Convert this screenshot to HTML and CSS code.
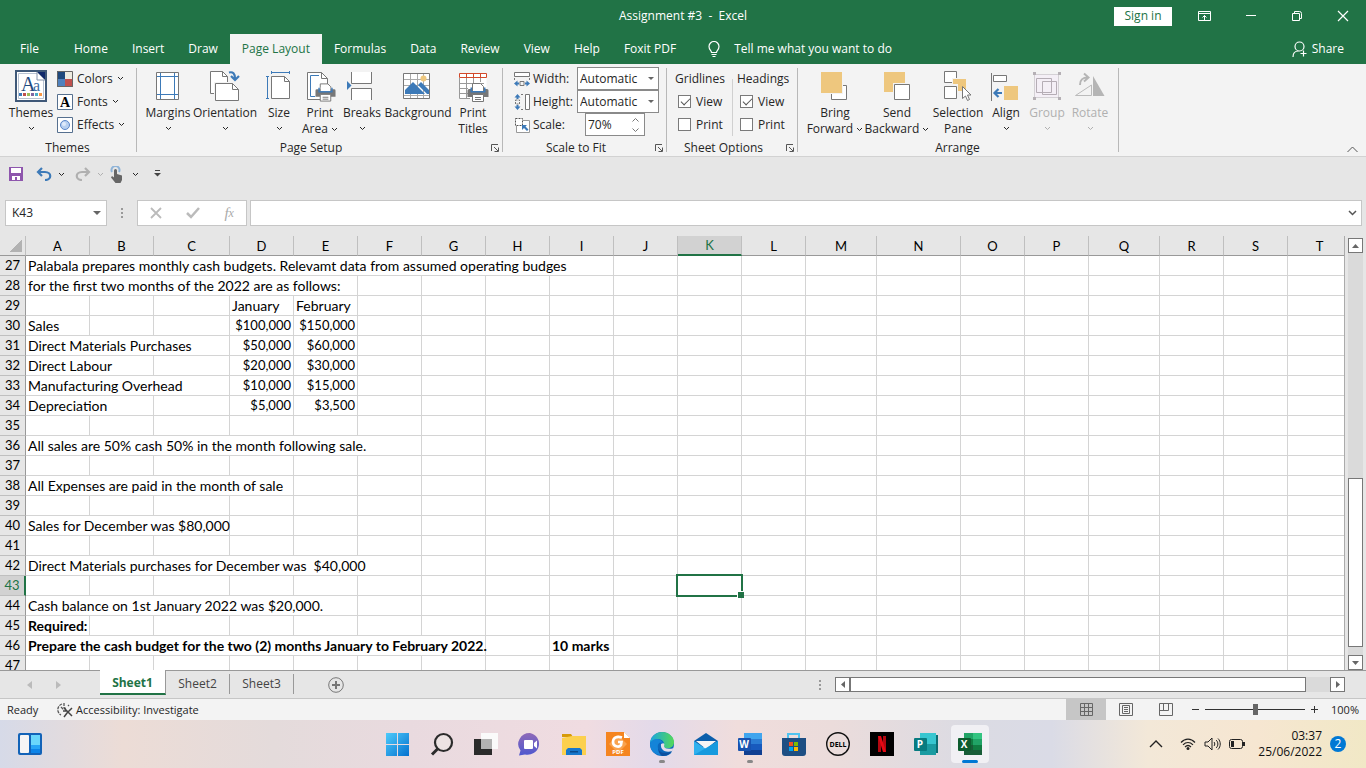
FILE: index.html
```
<!DOCTYPE html>
<html lang="en">
<head>
  <meta charset="UTF-8">
  <meta name="viewport" content="width=device-width, initial-scale=1.0">
  <title>Assignment #3 - Excel</title>
  <link rel="stylesheet" href="styles.css">
</head>
<body>
  <!-- shared symbols -->
  <svg class="defs" width="0" height="0">
    <symbol id="caret" viewBox="0 0 7 5"><path d="M1 1l2.5 2.5L6 1" fill="none" stroke="currentColor" stroke-width="1"/></symbol>
    <symbol id="launcher" viewBox="0 0 8 8"><path d="M0.5 7V0.5H7M3 3l4 4M7.5 3.5v4h-4" fill="none" stroke="#555"/></symbol>
    <symbol id="printer" viewBox="0 0 22 20">
      <path d="M5.500 8V1.500h8l3 3V8z" fill="#fff" stroke="#777"/>
      <path d="M2 7h18a1.500 1.500 0 0 1 1.500 1.500V15H.5V8.500A1.500 1.500 0 0 1 2 7z" fill="#777"/>
      <path d="M3.500 5.500H5V9h12V5.500h1.500v5h-15z" fill="#3d7ab8"/>
      <path d="M6 5h10v4H6z" fill="#fff"/>
      <path d="M5.500 12.500h11v7h-11z" fill="#fff" stroke="#777"/>
      <path d="M8 15.500h6M8 17.500h6" stroke="#777"/>
    </symbol>
  </svg>

  <header class="titlebar">
    <h1>Assignment #3&nbsp; -&nbsp; Excel</h1>
    <div class="window-tools">
      <button type="button" class="sign-in">Sign in</button>
      <button type="button" class="win-btn" aria-label="Ribbon display options"><svg width="14" height="12"><path d="M.5 1.500h12v9H.5zM.5 3.500h12M6.500 10V5.500M4.500 7.500l2-2 2 2" fill="none" stroke="#fff"/></svg></button>
      <button type="button" class="win-btn" aria-label="Minimize"><svg width="12" height="12"><path d="M1 5.500h10" stroke="#fff"/></svg></button>
      <button type="button" class="win-btn" aria-label="Restore"><svg width="12" height="12"><path d="M1.500 3.500h7v7h-7zM3.500 3V1.500h5a2 2 0 0 1 2 2v5H9" fill="none" stroke="#fff"/></svg></button>
      <button type="button" class="win-btn" aria-label="Close"><svg width="12" height="12"><path d="M1 1l10 10M11 1L1 11" stroke="#fff" stroke-width="1.200"/></svg></button>
    </div>
  </header>

  <nav class="ribbon-tabs">
    <a href="#file" class="file">File</a>
    <a href="#home">Home</a>
    <a href="#insert">Insert</a>
    <a href="#draw">Draw</a>
    <a href="#layout" class="active">Page Layout</a>
    <a href="#formulas">Formulas</a>
    <a href="#data">Data</a>
    <a href="#review">Review</a>
    <a href="#view">View</a>
    <a href="#help">Help</a>
    <a href="#foxit">Foxit PDF</a>
    <button type="button" class="tell-me"><svg width="12" height="17"><path d="M3.500 11.500c0-2-2.500-2.500-2.500-6a5 5 0 0 1 10 0c0 3.500-2.500 4-2.500 6zM3.500 13.500h5M4.500 15.500h3" fill="none" stroke="#fff" stroke-width="1.200"/></svg>Tell me what you want to do</button>
    <button type="button" class="share"><svg width="16" height="17"><path d="M7.500 1a4 4 0 1 1 0 9 4 4 0 1 1 0-9M1 16c0-4 2.500-6 5.500-6M11.500 9.500v6M8.500 12.500h6" fill="none" stroke="#fff" stroke-width="1.200"/></svg>Share</button>
  </nav>

  <section class="ribbon" aria-label="Page Layout">
    <div class="group themes">
      <div class="group-body">
        <button type="button" class="big">
          <svg width="32" height="32"><path d="M1 1h30v30H1z" fill="#fff" stroke="#3f5878" stroke-width="2"/><path d="M3.500 3.500h25v25h-25z" fill="none" stroke="#b9c3d2"/><path d="M22 2l8 8V2z" fill="#10296b"/><path d="M22 2v8h8z" fill="#fff" stroke="#8492aa"/><text x="6" y="21" class="themes-a">A</text><text x="18" y="21" class="themes-b">a</text><path d="M4 23h3v3H4z" fill="#3d7ab8"/><path d="M8 23h3v3H8z" fill="#c0504d"/><path d="M12 23h3v3h-3z" fill="#9bbb59"/><path d="M16 23h3v3h-3z" fill="#8064a2"/><path d="M20 23h3v3h-3z" fill="#4bacc6"/><path d="M24 23h3v3h-3z" fill="#f79646"/></svg>
          Themes<svg class="caret"><use href="#caret"/></svg>
        </button>
        <div class="stack">
          <button type="button" class="small"><svg width="16" height="16"><path d="M0 0h8v8H0z" fill="#1f497d"/><path d="M8 0h8v8H8z" fill="#eeece1"/><path d="M0 8h8v8H0z" fill="#4f81bd"/><path d="M8 8h8v8H8z" fill="#c0504d"/><path d="M.5.5h15v15H.5z" fill="none" stroke="#666"/></svg>Colors<svg class="caret"><use href="#caret"/></svg></button>
          <button type="button" class="small"><svg width="16" height="16"><path d="M.5.5h15v15H.5z" fill="#fff" stroke="#56708f"/><text x="8" y="13" class="font-a">A</text></svg>Fonts<svg class="caret"><use href="#caret"/></svg></button>
          <button type="button" class="small"><svg width="16" height="16"><path d="M.5.5h15v15H.5z" fill="#fff" stroke="#56708f"/><circle cx="8" cy="8" r="4.500" fill="#b7cff0" stroke="#5b86c9"/><circle cx="7" cy="7" r="2" fill="#dfeafb"/></svg>Effects<svg class="caret"><use href="#caret"/></svg></button>
        </div>
      </div>
      <h2>Themes</h2>
    </div>

    <div class="group page-setup">
      <div class="group-body">
        <button type="button" class="big">
          <svg width="32" height="32"><path d="M4.500 2.500h22v27h-22z" fill="#fff" stroke="#777"/><path d="M8.500 3v26M22.500 3v26M5 6.500h21M5 24.500h21" stroke="#3d7ab8"/></svg>
          Margins<svg class="caret"><use href="#caret"/></svg>
        </button>
        <button type="button" class="big">
          <svg width="32" height="32"><path d="M1.500 1.500h12l5 5v17h-17z" fill="#fff" stroke="#777"/><path d="M13.500 1.500v5h5" fill="none" stroke="#777"/><path d="M5 12h20l7 7v13H5z" fill="#f3f3f3"/><path d="M6.500 13.500h17l6 6v11h-23z" fill="#fff" stroke="#777"/><path d="M23.500 13.500v6h6" fill="none" stroke="#777"/><path d="M20 2.500c4-1 6 1 6 6M22 6l4 4 4-4" fill="none" stroke="#3d7ab8" stroke-width="2.200"/></svg>
          Orientation<svg class="caret"><use href="#caret"/></svg>
        </button>
        <button type="button" class="big">
          <svg width="32" height="32"><path d="M8.500 6.500h13l5 5v17h-18z" fill="#fff" stroke="#777"/><path d="M21.500 6.500v5h5" fill="none" stroke="#777"/><path d="M8 2.500h19M8.500 1v3M26.500 1v3M4.500 6v23M3 6.500h3M3 28.500h3" stroke="#3d7ab8"/></svg>
          Size<svg class="caret"><use href="#caret"/></svg>
        </button>
        <button type="button" class="big">
          <svg width="32" height="32"><path d="M3.500 2.500h14l6 6v21h-20z" fill="#fff" stroke="#777"/><path d="M17.500 2.500v6h6" fill="none" stroke="#777"/><path d="M15 5.500H6.500v21H11" fill="none" stroke="#3d7ab8"/><use href="#printer" x="11" y="12" width="21" height="20"/></svg>
          Print<span>Area <svg class="caret"><use href="#caret"/></svg></span>
        </button>
        <button type="button" class="big">
          <svg width="32" height="32"><path d="M5.500 2v11.500h20V2M5.500 30V18.500h20V30" fill="#fff" stroke="#777"/><path d="M1 11l4.500 4.500L1 20z" fill="#3d7ab8"/></svg>
          Breaks<svg class="caret"><use href="#caret"/></svg>
        </button>
        <button type="button" class="big">
          <svg width="32" height="32"><path d="M1.500 3.500h26v25h-26z" fill="#fff" stroke="#777"/><path d="M2 9.500h25M2 15.500h25M2 25.500h25M8.500 4v24M15.500 4v24M21.500 4v24" stroke="#aaa"/><path d="M3 24v-4l8-8 12 12z" fill="#3d7ab8"/><path d="M16 15l3-3 8 8v4h-2z" fill="#3d7ab8"/><circle cx="21.500" cy="8.500" r="3" fill="#eec77e"/></svg>
          Background
        </button>
        <button type="button" class="big">
          <svg width="32" height="32"><path d="M2.500 3.500h27v25h-27z" fill="#fff"/><path d="M2.500 8v20.500H13M9.500 8v20M16.500 8v6M23.500 8v4M3 13.500h24M3 18.500h8M3 23.500h8" fill="none" stroke="#999"/><path d="M2.500 3.500h27v4h-27zM9.500 4v3M16.500 4v3M23.500 4v3" fill="none" stroke="#d2492a"/><use href="#printer" x="10" y="12" width="22" height="20"/></svg>
          Print<span>Titles</span>
        </button>
      </div>
      <h2>Page Setup</h2>
      <button type="button" class="launcher" aria-label="Page Setup dialog"><svg width="8" height="8"><use href="#launcher"/></svg></button>
    </div>

    <div class="group scale">
      <div class="group-body">
        <div class="field">
          <svg width="16" height="16"><path d="M.5 1.500h15v4H.5z" fill="#fff" stroke="#777"/><path d="M.5 7v2M15.500 7v2M6 10.500h4v4H6z" fill="none" stroke="#777"/><path d="M0 12.500l3.500-3v2H5v2H3.500v2zM16 12.500l-3.500-3v2H11v2h1.500v2z" fill="#3d7ab8"/></svg>
          <label for="width">Width:</label>
          <span class="combo"><select id="width"><option>Automatic</option></select></span>
        </div>
        <div class="field">
          <svg width="16" height="16"><path d="M11.500.5h4v15h-4z" fill="#fff" stroke="#777"/><path d="M7 .5h3M7 15.500h3M1.500 6h4v4h-4z" fill="none" stroke="#777" stroke-dasharray="2 1"/><path d="M3.500 0l3 3.500h-2V5h-2V3.500h-2zM3.500 16l3-3.500h-2V11h-2v1.500h-2z" fill="#3d7ab8"/></svg>
          <label for="height">Height:</label>
          <span class="combo"><select id="height"><option>Automatic</option></select></span>
        </div>
        <div class="field">
          <svg width="16" height="16"><path d="M9 3.500h6.500v12h-13V9" fill="#fff" stroke="#999"/><path d="M1.500 1.500h7v7h-7z" fill="#fff" stroke="#555" stroke-dasharray="2 1"/><path d="M8 8h5l-1.500 1.500 3 3-1.500 1.500-3-3L8 13z" fill="#3d7ab8"/></svg>
          <label for="scale">Scale:</label>
          <span class="spin"><input type="text" id="scale" value="70%"><svg width="7" height="16"><path d="M.5 4.500l3-3 3 3M.5 11.500l3 3 3-3" fill="none" stroke="#777"/></svg></span>
        </div>
      </div>
      <h2>Scale to Fit</h2>
      <button type="button" class="launcher" aria-label="Scale dialog"><svg width="8" height="8"><use href="#launcher"/></svg></button>
    </div>

    <div class="group sheet-options">
      <div class="group-body">
        <fieldset>
          <legend>Gridlines</legend>
          <label><input type="checkbox" checked>View</label>
          <label><input type="checkbox">Print</label>
        </fieldset>
        <fieldset>
          <legend>Headings</legend>
          <label><input type="checkbox" checked>View</label>
          <label><input type="checkbox">Print</label>
        </fieldset>
      </div>
      <h2>Sheet Options</h2>
      <button type="button" class="launcher" aria-label="Sheet dialog"><svg width="8" height="8"><use href="#launcher"/></svg></button>
    </div>

    <div class="group arrange">
      <div class="group-body">
        <button type="button" class="big">
          <svg width="32" height="32"><path d="M12.500 15.500h15v14h-15z" fill="#fff" stroke="#777"/><path d="M1 1h23v23H1z" fill="#f3f3f3"/><path d="M2 2h21v21H2z" fill="#eec77e"/></svg>
          Bring<span>Forward <svg class="caret"><use href="#caret"/></svg></span>
        </button>
        <button type="button" class="big">
          <svg width="32" height="32"><path d="M3 2h21v20H3z" fill="#eec77e"/><path d="M12 13h18v18H12z" fill="#f3f3f3"/><path d="M13.500 14.500h15v15h-15z" fill="#fff" stroke="#777"/></svg>
          Send<span>Backward <svg class="caret"><use href="#caret"/></svg></span>
        </button>
        <button type="button" class="big">
          <svg width="32" height="32"><path d="M2.500 1.500h12v11h-12zM2.500 16.500h12v12h-12z" fill="#fff" stroke="#777"/><path d="M10 8h15v15H15v-8h-5z" fill="#f3f3f3"/><path d="M11 9h13v12h-8v-7h-5z" fill="#eec77e"/><path d="M20.500 16.500v12l3-2.500 2 4.500 2-1-2-4.500h3.500z" fill="#fff" stroke="#777"/></svg>
          Selection<span>Pane</span>
        </button>
        <button type="button" class="big">
          <svg width="32" height="32"><path d="M1.500 3v28" stroke="#777"/><path d="M3.500 5.500h13v6h-13z" fill="#fff" stroke="#777"/><path d="M14 16h14v14H14z" fill="#eec77e"/><path d="M12 23H5M8.500 19L4.500 23l4 4" fill="none" stroke="#3d7ab8" stroke-width="2.200"/></svg>
          Align<svg class="caret"><use href="#caret"/></svg>
        </button>
        <button type="button" class="big" disabled>
          <svg width="32" height="32"><path d="M3.500 4.500h24v23h-24z" fill="#f4eff6" stroke="#b5b0b5" stroke-dasharray="1 1"/><path d="M5.500 8.500h15v14h-15zM11.500 11.500h14v13h-14z" fill="none" stroke="#b5adb5"/><path d="M2 2h3v3H2zM27 2h3v3h-3zM2 27h3v3H2zM27 27h3v3h-3z" fill="#b5b0b5"/></svg>
          Group<svg class="caret"><use href="#caret"/></svg>
        </button>
        <button type="button" class="big" disabled>
          <svg width="32" height="32"><path d="M1.500 25.500h16V15z" fill="#f3f3f3" stroke="#bbb"/><path d="M19 6v20h11.500z" fill="#b5b5b5"/><path d="M6 15c0-6 3-7.500 8-7.500M10 3.500l4.500 4-4.500 4" fill="none" stroke="#b5b5b5" stroke-width="2"/></svg>
          Rotate<svg class="caret"><use href="#caret"/></svg>
        </button>
      </div>
      <h2>Arrange</h2>
    </div>

    <button type="button" class="collapse" aria-label="Collapse ribbon"><svg width="11" height="7"><path d="M.5 6l5-5 5 5" fill="none" stroke="#555"/></svg></button>
  </section>

  <div class="quick-access">
    <button type="button" aria-label="Save"><svg width="14" height="14"><path d="M0 0h14v14H0z" fill="#8e56ad"/><path d="M2 1h10v5H2zM3 9h8v4H8v-3H6v3H3z" fill="#fff"/></svg></button>
    <button type="button" class="undo" aria-label="Undo"><svg width="16" height="14"><path d="M6 1L2 5l4 4M2 5h7c7 0 7 8 0 8" fill="none" stroke="#3d7ab8" stroke-width="2.200"/></svg><svg class="caret"><use href="#caret"/></svg></button>
    <button type="button" class="redo" aria-label="Redo" disabled><svg width="16" height="14"><path d="M10 1l4 4-4 4M14 5H7c-7 0-7 8 0 8" fill="none" stroke="#b0b0b0" stroke-width="2.200"/></svg><svg class="caret"><use href="#caret"/></svg></button>
    <button type="button" class="touch" aria-label="Touch mode"><svg width="14" height="17"><path d="M2 6a4 4 0 1 1 7 0" fill="none" stroke="#8fb4d8" stroke-width="2"/><path d="M4 4.500a1.500 1.500 0 0 1 3 0V8l5 1.500V14l-1.500 3H5.500L1 11.500 2 10l2 1.500z" fill="#666"/></svg><svg class="caret"><use href="#caret"/></svg></button>
    <button type="button" aria-label="Customize toolbar"><svg width="7" height="8"><path d="M1 .5h5" stroke="#444"/><path d="M0 3h7L3.500 6.500z" fill="#444"/></svg></button>
  </div>

  <div class="formula-bar">
    <span class="name-box"><input type="text" value="K43" aria-label="Name box"></span>
    <span class="grip"></span>
    <div class="formula-tools">
      <button type="button" aria-label="Cancel"><svg width="12" height="12"><path d="M1 1l10 10M11 1L1 11" stroke="#bbb" stroke-width="1.800"/></svg></button>
      <button type="button" aria-label="Enter"><svg width="14" height="12"><path d="M1 6l4 4 8-9" fill="none" stroke="#bbb" stroke-width="2.500"/></svg></button>
      <button type="button" class="fx" aria-label="Insert function">f<sub>x</sub></button>
    </div>
    <span class="formula-input"><input type="text" aria-label="Formula"><svg width="9" height="6"><path d="M1 1l3.500 3.500L8 1" fill="none" stroke="#555" stroke-width="1.500"/></svg></span>
  </div>

  <main class="workbook">
    <div class="sheet">
      <table id="sheet">
        <colgroup></colgroup>
        <thead></thead>
        <tbody></tbody>
      </table>
    </div>
    <div class="vscroll">
      <button type="button" aria-label="Scroll up"><svg width="7" height="4"><path d="M0 4h7L3.500 0z" fill="#666"/></svg></button>
      <div class="track"><div class="thumb"></div></div>
      <button type="button" aria-label="Scroll down"><svg width="7" height="4"><path d="M0 0h7L3.500 4z" fill="#666"/></svg></button>
    </div>
  </main>

  <nav class="sheet-tabs">
    <div class="sheet-nav">
      <svg width="5" height="8"><path d="M5 0v8L0 4z" fill="#bbb"/></svg>
      <svg width="5" height="8"><path d="M0 0v8l5-4z" fill="#bbb"/></svg>
    </div>
    <a href="#sheet" class="active">Sheet1</a>
    <a href="#sheet2">Sheet2</a>
    <a href="#sheet3">Sheet3</a>
    <button type="button" class="add-sheet" aria-label="New sheet"><svg width="16" height="16"><circle cx="8" cy="8" r="7.300" fill="none" stroke="#777"/><path d="M8 4v8M4 8h8" stroke="#777" stroke-width="2"/></svg></button>
    <span class="grip"></span>
    <div class="hscroll">
      <button type="button" aria-label="Scroll left"><svg width="4" height="7"><path d="M4 0v7L0 3.500z" fill="#666"/></svg></button>
      <div class="track"><div class="thumb"></div></div>
      <button type="button" aria-label="Scroll right"><svg width="4" height="7"><path d="M0 0v7l4-3.500z" fill="#666"/></svg></button>
    </div>
  </nav>

  <div class="statusbar">
    <span class="ready">Ready</span>
    <button type="button" class="access"><svg width="16" height="16"><path d="M5 2a6 6 0 0 0-1 11M7 1v5M4 5l2 2 3-1M11 3l1 1" fill="none" stroke="#555" stroke-width="1.300" stroke-dasharray="3 1"/><path d="M7 6l8 8M7 15l3-4 5-5M6 9h4" fill="none" stroke="#444" stroke-width="1.500"/></svg>Accessibility: Investigate</button>
    <div class="views">
      <button type="button" class="on" aria-label="Normal"><svg width="13" height="13"><path d="M.5.5h12v12H.5zM4.500 0v13M8.500 0v13M0 4.500h13M0 8.500h13" fill="none" stroke="#666"/></svg></button>
      <button type="button" aria-label="Page Layout view"><svg width="14" height="13"><path d="M.5.500h13v12H.5zM3.500 2.500h7v8h-7zM5 4.500h4M5 6.500h4M5 8.500h4" fill="none" stroke="#666"/></svg></button>
      <button type="button" aria-label="Page Break view"><svg width="14" height="13"><path d="M.5.5h13v12H.5zM4.500 0v7M9.500 0v7.500H0" fill="none" stroke="#666"/></svg></button>
    </div>
    <div class="zoom">
      <button type="button" aria-label="Zoom out"><svg width="9" height="9"><path d="M1 4.500h7" stroke="#333"/></svg></button>
      <input type="range" min="0" max="100" value="50" aria-label="Zoom">
      <button type="button" aria-label="Zoom in"><svg width="9" height="9"><path d="M1 4.500h7M4.500 1v7" stroke="#333"/></svg></button>
      <span>100%</span>
    </div>
  </div>

  <footer class="taskbar">
    <button type="button" class="widgets" aria-label="Widgets"><svg width="24" height="22"><rect width="24" height="22" rx="2" fill="#1263b8"/><rect x="2" y="2" width="9" height="18" rx="1" fill="#f5f5f5"/><path d="M13 2h9v10h-9z" fill="#6ad7fb"/><path d="M13 12h9v4h-9z" fill="#27a5f5"/><path d="M13 16h9v4h-9z" fill="#0c84e8"/></svg></button>
    <div class="apps">
      <button type="button" aria-label="Start"><svg width="24" height="24"><defs><linearGradient id="win" x2="1" y2="1"><stop stop-color="#4dcbfb"/><stop offset="1" stop-color="#0571cf"/></linearGradient></defs><path d="M0 1h11v11H0zM12 1h11v11H12zM0 13h11v11H0zM12 13h11v11H12z" fill="url(#win)"/></svg></button>
      <button type="button" aria-label="Search"><svg width="24" height="24"><circle cx="13.500" cy="10.500" r="8.500" fill="#ece3e3" stroke="#2b2b2b" stroke-width="2.200"/><path d="M7.500 17L2 22.500" stroke="#2b2b2b" stroke-width="3"/></svg></button>
      <button type="button" aria-label="Task view"><svg width="24" height="24"><path d="M7 1h17v16H7z" fill="#fafafa"/><path d="M0 7h18v16H0z" fill="#2b2b2b"/><path d="M7 7h11v10H7z" fill="#b3b3b3"/></svg></button>
      <button type="button" aria-label="Chat"><svg width="24" height="24"><defs><linearGradient id="chat" x2="0" y2="1"><stop stop-color="#8f6ab8"/><stop offset="1" stop-color="#4e57cf"/></linearGradient></defs><path d="M12 1a11.500 11 0 1 1-5 21.500L1 23.500l1.500-5A11.500 11 0 0 1 12 1z" fill="url(#chat)"/><rect x="6" y="8" width="9" height="9" rx="1" fill="#fff"/><path d="M16 11l3-2.500v8L16 14z" fill="#fff"/></svg></button>
      <button type="button" aria-label="File Explorer"><svg width="24" height="24"><path d="M0 2h9l2 3H0z" fill="#d79a08"/><path d="M0 6l10-2h14v19H0z" fill="#fcd04e"/><path d="M4 23v-5l2-2h12l2 2v5z" fill="#1777cc"/><path d="M8 19h8v1.500H8z" fill="#0b4a8c"/></svg></button>
      <button type="button" aria-label="Foxit PDF"><svg width="24" height="24"><path d="M0 0h18l6 6v18H0z" fill="#f58520"/><path d="M18 0v6h6z" fill="#fff"/><path d="M12 3l9 9-9 9-9-9z" fill="#f9a34f"/><path d="M16 5.500C10 3.500 7 6.500 7 10c0 4.500 6 6 8 3l.5-3H12" fill="none" stroke="#fff" stroke-width="2.600"/><text x="12" y="22" class="pdf">PDF</text></svg></button>
      <button type="button" class="running" aria-label="Edge"><svg width="24" height="24"><defs><linearGradient id="edge" x2="1" y2="0"><stop stop-color="#1aa5e0"/><stop offset="1" stop-color="#54d958"/></linearGradient></defs><circle cx="12" cy="12" r="12" fill="#0b68bd"/><path d="M0 11C1 4 6 0 12 0c7 0 12 5 12 10 0 5-4 7-8 6-3 0-2-2-2-4 0-5-8-7-14-1z" fill="url(#edge)"/><path d="M0 12c2-6 10-7 13-1-4-2-6 2-5 5 1 5 7 7 14 4-3 4-8 5-12 3C4 22 0 18 0 12z" fill="#1484d8"/><path d="M8 15c0 5 7 8 14 4-2 4-6 5-10 5-3-2-4-5-4-9z" fill="#0c4f9f"/><path d="M11 12c3-2 4 0 3 2 0 2 3 4 10 2l-2 3c-5 2-12 0-11-7z" fill="#e4dce9"/></svg></button>
      <button type="button" aria-label="Mail"><svg width="24" height="24"><path d="M0 9l12-8 12 8v6H0z" fill="#0b5eab"/><path d="M2 9h20l-10 8z" fill="#f5f5f5"/><path d="M0 9l12 8 12-8v14H0z" fill="#2fb0ee"/><path d="M0 23l24-14v14z" fill="#169ade"/></svg></button>
      <button type="button" class="running" aria-label="Word"><svg width="24" height="24"><path d="M6 1h18v6H6z" fill="#41a5ee"/><path d="M6 7h18v5H6z" fill="#2b7cd3"/><path d="M6 12h18v6H6z" fill="#185abd"/><path d="M6 18h18v5H6z" fill="#103f91"/><rect y="6" width="13" height="13" rx="1" fill="#1853b0"/><text x="6" y="16" class="letter">W</text></svg></button>
      <button type="button" aria-label="Microsoft Store"><svg width="24" height="24"><path d="M6 6V2h11v4" fill="none" stroke="#4fc3f0" stroke-width="2"/><path d="M0 6h24v15a3 3 0 0 1-3 3H3a3 3 0 0 1-3-3z" fill="#1d4e83"/><path d="M7 10h4v4H7z" fill="#f25022"/><path d="M12 10h4v4h-4z" fill="#7fba00"/><path d="M7 15h4v4H7z" fill="#00a4ef"/><path d="M12 15h4v4h-4z" fill="#ffb900"/></svg></button>
      <button type="button" aria-label="Dell"><svg width="24" height="24"><circle cx="12" cy="12" r="11.300" fill="none" stroke="#111" stroke-width="1.400"/><text x="12" y="15" class="dell">DELL</text></svg></button>
      <button type="button" aria-label="Netflix"><svg width="24" height="24"><path d="M0 0h24v24H0z" fill="#000"/><path d="M8 4h3v16H8zM13 4h3v16h-3z" fill="#b20710"/><path d="M8 4h3l5 16h-3z" fill="#e50914"/></svg></button>
      <button type="button" aria-label="Publisher"><svg width="24" height="24"><path d="M18 3h6v18h-6z" fill="#0b6e73"/><path d="M6 1h16v11H6z" fill="#37c6d0"/><path d="M6 12h16v11H6z" fill="#1a9ba1"/><rect y="6" width="13" height="13" rx="1" fill="#077b80"/><text x="6" y="16" class="letter">P</text></svg></button>
      <button type="button" class="current" aria-label="Excel"><svg width="24" height="24"><path d="M6 1h9v6H6z" fill="#21a366"/><path d="M15 1h9v6h-9z" fill="#33c481"/><path d="M6 7h9v6H6z" fill="#107c41"/><path d="M15 7h9v6h-9z" fill="#21a366"/><path d="M6 13h18v10H6z" fill="#185c37"/><path d="M15 13h9v5h-9z" fill="#107c41"/><rect y="6" width="13" height="13" rx="1" fill="#0e5c2f"/><text x="6" y="16" class="letter">X</text></svg></button>
    </div>
    <div class="tray">
      <svg width="14" height="8"><path d="M1 7l6-6 6 6" fill="none" stroke="#222" stroke-width="1.400"/></svg>
      <svg class="wifi" width="16" height="12"><path d="M1 4.500c4-4.500 10-4.500 14 0M3 6.800c3-3 7-3 10 0M5 9c2-2 4-2 6 0" fill="none" stroke="#222" stroke-width="1.200"/><circle cx="8" cy="10.500" r="1.500" fill="#222"/></svg>
      <svg width="17" height="14"><path d="M1 5h3l4-4v12L4 9H1zM10 5c1 1 1 3 0 4M12 3c2.500 2 2.500 6 0 8M14 1.500c3 3 3 8 0 11" fill="none" stroke="#222"/></svg>
      <svg width="17" height="10"><rect x=".5" y=".5" width="13" height="9" rx="2" fill="none" stroke="#222"/><path d="M2 2h3v6H2zM14 3h2v4h-2z" fill="#222"/></svg>
      <time datetime="2022-06-25T03:37">03:37<br>25/06/2022</time>
      <span class="badge">2</span>
    </div>
  </footer>

  <script src="script.js"></script>
</body>
</html>
```
FILE: styles.css
```
* {
  box-sizing: border-box;
}
body {
  margin: 0;
  height: 100vh;
  display: flex;
  flex-direction: column;
  overflow: hidden;
  background: #e6e6e6;
  color: #262626;
  font: 12px/16px "Open Sans", "Noto Sans", sans-serif;
}
button,
input,
select {
  font: inherit;
  color: inherit;
  border: none;
  background: none;
  padding: 0;
  margin: 0;
}
button {
  display: flex;
  align-items: center;
  justify-content: center;
}
a {
  color: inherit;
  text-decoration: none;
}
svg {
  flex: none;
}
h1,
h2 {
  margin: 0;
  font-size: 12px;
  font-weight: normal;
}
.defs {
  position: absolute;
}
.caret {
  width: 7px;
  height: 5px;
}

/* title bar */
.titlebar {
  display: grid;
  grid-template-columns: 1fr auto 1fr;
  align-items: center;
  height: 32px;
  background: #217346;
  color: #fff;
}
.titlebar h1 {
  grid-column: 2;
}
.window-tools {
  display: flex;
  justify-content: flex-end;
  align-items: center;
}
.sign-in {
  width: 58px;
  height: 19px;
  margin-right: 10px;
  background: #fff;
  color: #217346;
}
.win-btn {
  width: 46px;
  height: 30px;
}

/* ribbon tabs */
.ribbon-tabs {
  display: flex;
  height: 32px;
  padding-left: 8px;
  background: #217346;
  color: #fff;
}
.ribbon-tabs a {
  padding: 9px 12px 0;
}
.ribbon-tabs .file {
  margin-right: 11px;
}
.ribbon-tabs .active {
  margin: 2px 0 0;
  padding-top: 7px;
  background: #f3f3f3;
  color: #217346;
}
.tell-me {
  gap: 14px;
  margin-left: 20px;
  padding-top: 2px;
}
.share {
  gap: 4px;
  margin-left: auto;
  margin-right: 22px;
  padding-top: 2px;
}

/* ribbon */
.ribbon {
  display: flex;
  height: 93px;
  background: #f3f3f3;
  border-bottom: 1px solid #d2d2d2;
}
.group {
  position: relative;
  display: flex;
  flex-direction: column;
  justify-content: space-between;
  padding-top: 3px;
}
.group::after {
  content: "";
  position: absolute;
  right: 0;
  top: 4px;
  bottom: 4px;
  width: 1px;
  background: #b8b8b8;
}
.group h2 {
  padding-right: 2px;
  text-align: center;
}
.page-setup h2,
.scale h2,
.sheet-options h2 {
  padding-right: 18px;
}
.themes {
  width: 137px;
}
.page-setup {
  width: 366px;
}
.scale {
  width: 164px;
}
.sheet-options {
  width: 131px;
}
.arrange {
  width: 321px;
}
.themes .group-body,
.sheet-options .group-body {
  display: flex;
}
.themes .group-body {
  padding-left: 5px;
}
.page-setup .group-body {
  display: grid;
  grid-template-columns: 48px 66px 42px 40px 44px 68px 42px;
  padding-left: 7px;
}
.arrange .group-body {
  display: grid;
  grid-template-columns: 60px 64px 58px 38px 44px 42px;
  padding-left: 7px;
}
.big {
  flex-direction: column;
  justify-content: flex-start;
  padding-top: 3px;
  white-space: nowrap;
}
.big > svg:first-child {
  margin-bottom: 3px;
}
.big > .caret {
  margin-top: 5px;
}
.big span .caret {
  vertical-align: middle;
}
.big:disabled {
  color: #b0b0b0;
}
.themes .big {
  width: 52px;
}
.small {
  gap: 4px;
  height: 23px;
}
.themes-a {
  font: 20px "Liberation Serif", serif;
  fill: #1f4a80;
}
.themes-b {
  font: 16px "Liberation Serif", serif;
  fill: #3d6aa0;
}
.font-a {
  font: bold 14px "Liberation Serif", serif;
  text-anchor: middle;
}
.launcher {
  position: absolute;
  right: 4px;
  bottom: 4px;
}
.field {
  display: grid;
  grid-template-columns: 16px 44px auto;
  justify-content: start;
  align-items: center;
  column-gap: 3px;
  height: 23px;
  padding-left: 11px;
}
.combo {
  position: relative;
  width: 82px;
  margin-left: -3px;
  border: 1px solid #8a8a8a;
  background: #fff;
}
.combo::after {
  content: "";
  position: absolute;
  right: 4px;
  top: 9px;
  border: 3px solid transparent;
  border-top-color: #666;
}
.combo select {
  display: block;
  appearance: none;
  width: 100%;
  height: 21px;
  padding-left: 2px;
}
.spin {
  display: flex;
  align-items: center;
  width: 60px;
  height: 23px;
  margin-left: 5px;
  padding: 0 5px 0 2px;
  border: 1px solid #8a8a8a;
  background: #fff;
}
.spin input {
  flex: 1;
  min-width: 0;
}
fieldset {
  margin: 0;
  padding: 0 0 0 8px;
  border: none;
  width: 65px;
}
fieldset + fieldset {
  padding-left: 4px;
  border-left: 1px solid #d0d0d0;
}
legend {
  padding: 0;
  line-height: 23px;
}
fieldset label {
  display: flex;
  align-items: center;
  gap: 5px;
  height: 23px;
  padding-left: 3px;
}
fieldset input {
  appearance: none;
  width: 13px;
  height: 13px;
  border: 1px solid #7a7a7a;
  background: #fff;
}
fieldset input:checked::after {
  content: "";
  display: block;
  width: 4px;
  height: 8px;
  margin-left: 4px;
  border: solid #555;
  border-width: 0 1px 1px 0;
  transform: rotate(45deg);
}
.collapse {
  align-self: flex-end;
  margin: 0 8px 3px auto;
}

/* quick access and formula bar */
.quick-access {
  display: flex;
  align-items: center;
  height: 34px;
  padding-left: 9px;
}
.quick-access button {
  gap: 6px;
}
.undo,
.redo {
  margin-left: 13px;
}
.redo:disabled {
  color: #b0b0b0;
}
.quick-access .undo {
  margin-right: -3px;
}
.quick-access .touch {
  gap: 8px;
  margin: 0 15px 0 6px;
}
.formula-bar {
  display: flex;
  align-items: center;
  height: 26px;
  margin: 9px 4px 10px 5px;
}
.name-box,
.formula-tools,
.formula-input {
  display: flex;
  align-items: center;
  height: 26px;
  border: 1px solid #c6c6c6;
  background: #fff;
}
.name-box {
  width: 102px;
  padding: 0 5px 0 6px;
}
.name-box input,
.formula-input input {
  flex: 1;
  min-width: 0;
}
.name-box::after {
  content: "";
  border: 4px solid transparent;
  border-top-color: #666;
  border-bottom-width: 0;
}
.grip {
  width: 2px;
  height: 10px;
  background: repeating-linear-gradient(#999 0 2px, transparent 2px 4px);
}
.formula-bar .grip {
  margin: 0 14px;
}
.formula-tools {
  width: 110px;
  justify-content: space-around;
}
.fx {
  color: #aaa;
  font: italic 15px "Liberation Serif", serif;
}
.fx sub {
  font-size: 12px;
  vertical-align: baseline;
}
.formula-input {
  flex: 1;
  margin-left: 3px;
  padding-right: 4px;
}

/* sheet */
.workbook {
  flex: 1;
  min-height: 0;
  display: flex;
}
.sheet {
  flex: 1;
  min-width: 0;
  overflow: hidden;
  background: #fff;
  border-right: 1px solid #ababab;
}
#sheet {
  table-layout: fixed;
  width: 0;
  border-collapse: separate;
  border-spacing: 0;
  color: #000;
  font: 14px/19px Lato, "Open Sans", sans-serif;
}
#sheet th,
#sheet td {
  height: 20px;
  padding: 0 2px;
  border-right: 1px solid #d4d4d4;
  border-bottom: 1px solid #d4d4d4;
  white-space: nowrap;
  text-align: left;
}
#sheet th {
  padding: 0;
  background: #e6e6e6;
  border-color: #bfbfbf;
  font-size: 13px;
  font-weight: normal;
  text-align: center;
}
#sheet thead th {
  border-bottom-color: #999;
  line-height: 18px;
}
#sheet tbody th {
  border-right-color: #999;
}
#sheet .corner {
  background: linear-gradient(135deg, transparent 50%, #b2b2b2 50%) no-repeat 10px 4px / 12px 12px #e6e6e6;
}
#sheet .selected {
  background: #d2d2d2;
  color: #217346;
}
#sheet thead .selected {
  border-bottom: 2px solid #217346;
}
#sheet tbody .selected {
  border-right: 2px solid #217346;
}
#sheet .num {
  font-size: 13px;
  text-align: right;
}
#sheet .bold {
  font-weight: bold;
}
#sheet .cursor {
  position: relative;
}
#sheet .cursor::before {
  content: "";
  position: absolute;
  inset: -2px;
  border: 2px solid #217346;
}
#sheet .cursor::after {
  content: "";
  position: absolute;
  right: -3px;
  bottom: -3px;
  width: 6px;
  height: 6px;
  background: #217346;
  border: solid #fff;
  border-width: 1px 0 0 1px;
}

/* scrollbars */
.vscroll {
  display: flex;
  flex-direction: column;
  width: 21px;
  padding: 2px 3px 0;
}
.vscroll button,
.hscroll button {
  width: 15px;
  height: 15px;
  border: 1px solid #777;
  background: #fff;
}
.track {
  flex: 1;
  display: flex;
  background: #dadada;
}
.thumb {
  border: 1px solid #777;
  background: #fff;
}
.vscroll .track {
  flex-direction: column;
  justify-content: flex-end;
  padding-bottom: 8px;
}
.vscroll .thumb {
  height: 43%;
}
.hscroll .thumb {
  width: 95%;
}

/* sheet tabs */
.sheet-tabs {
  display: flex;
  align-items: center;
  height: 28px;
  color: #444;
  border-top: 1px solid #999;
}
.sheet-nav {
  display: flex;
  align-items: center;
  gap: 24px;
  width: 100px;
  padding-left: 27px;
}
.sheet-tabs a {
  width: 64px;
  height: 20px;
  margin-bottom: 2px;
  border-right: 1px solid #999;
  text-align: center;
  line-height: 20px;
}
.sheet-tabs .active {
  width: 66px;
  height: 25px;
  margin: -2px 0 2px;
  padding-top: 3px;
  background: #fff;
  border-bottom: 2px solid #217346;
  color: #217346;
  font-weight: bold;
}
.add-sheet {
  margin-left: 34px;
}
.sheet-tabs .grip {
  margin-left: auto;
}
.hscroll {
  display: flex;
  width: 510px;
  margin: 0 21px 0 14px;
}

/* status bar */
.statusbar {
  display: flex;
  align-items: center;
  height: 22px;
  border-top: 1px solid #c6c6c6;
  background: #f3f3f3;
  font-size: 11px;
}
.ready {
  width: 57px;
  padding-left: 7px;
}
.access {
  gap: 3px;
}
.views {
  display: flex;
  align-self: stretch;
  margin-left: auto;
}
.views button {
  width: 40px;
}
.views .on {
  background: #c6c6c6;
}
.zoom {
  display: flex;
  align-items: center;
  gap: 5px;
  margin: 0 7px 0 5px;
}
.zoom input {
  appearance: none;
  width: 100px;
  height: 11px;
  background: linear-gradient(#333, #333) no-repeat center / 100% 1px;
}
.zoom input::-webkit-slider-thumb {
  appearance: none;
  width: 5px;
  height: 11px;
  background: #666;
}
.zoom span {
  margin-left: 7px;
}

/* taskbar */
.taskbar {
  display: grid;
  grid-template-columns: 1fr auto 1fr;
  align-items: center;
  height: 48px;
  background: linear-gradient(90deg, #d6dae8 0, #ecdcd6 9%, #e4dbdb 20%, #e9dadf 30%, #f0dce1 43%, #e3daea 48%, #f0dddc 54%, #ebdcdb 61%, #dbdbe3 71%, #dadbe6 77%, #f3e8d8 84%, #f6e6d1 92%, #f1e8c6 100%);
}
.widgets {
  justify-self: start;
  margin-left: 18px;
}
.apps {
  display: flex;
  padding-left: 2px;
}
.apps button {
  position: relative;
  width: 38px;
  height: 38px;
  margin: 0 3px;
  border-radius: 4px;
}
.apps .current {
  background: #f1f0f4;
}
.running::after,
.current::after {
  content: "";
  position: absolute;
  bottom: 0;
  width: 6px;
  height: 3px;
  border-radius: 2px;
  background: #888;
}
.current::after {
  width: 16px;
  background: #0078d4;
}
.letter {
  fill: #fff;
  font: bold 10px "Open Sans", sans-serif;
  text-anchor: middle;
}
.pdf {
  fill: #fff;
  font: bold 6px "Open Sans", sans-serif;
  text-anchor: middle;
}
.dell {
  font: bold 7px "Open Sans", sans-serif;
  text-anchor: middle;
}
.tray {
  display: flex;
  justify-content: flex-end;
  align-items: center;
  gap: 8px;
  padding-right: 20px;
  color: #111;
}
.tray .wifi {
  margin-left: 9px;
}
.tray time {
  margin-left: 4px;
  text-align: right;
}
.badge {
  width: 16px;
  height: 16px;
  border-radius: 50%;
  background: #0078d4;
  color: #fff;
  text-align: center;
}
```
FILE: script.js
```
const widths = [64, 64, 76, 64, 64, 64, 64, 64, 64, 64, 64, 64, 71, 84, 64, 64, 71, 64, 64, 64];
const firstRow = 27;
const lastRow = 47;

// cells by row: [column, text, columns covered, class]
const cells = {
  27: [[0, 'Palabala prepares monthly cash budgets. Relevamt data from assumed operating budges', 9]],
  28: [[0, 'for the first two months of the 2022 are as follows:', 5]],
  29: [[3, 'January'], [4, 'February']],
  30: [[0, 'Sales'], [3, '$100,000', 1, 'num'], [4, '$150,000', 1, 'num']],
  31: [[0, 'Direct Materials Purchases', 3], [3, '$50,000', 1, 'num'], [4, '$60,000', 1, 'num']],
  32: [[0, 'Direct Labour', 2], [3, '$20,000', 1, 'num'], [4, '$30,000', 1, 'num']],
  33: [[0, 'Manufacturing Overhead', 3], [3, '$10,000', 1, 'num'], [4, '$15,000', 1, 'num']],
  34: [[0, 'Depreciation', 2], [3, '$5,000', 1, 'num'], [4, '$3,500', 1, 'num']],
  36: [[0, 'All sales are 50% cash 50% in the month following sale.', 6]],
  38: [[0, 'All Expenses are paid in the month of sale', 4]],
  40: [[0, 'Sales for December was $80,000', 3]],
  42: [[0, 'Direct Materials purchases for December was  $40,000', 6]],
  43: [[10, '', 1, 'cursor']],
  44: [[0, 'Cash balance on 1st January 2022 was $20,000.', 5]],
  45: [[0, 'Required:', 1, 'bold']],
  46: [[0, 'Prepare the cash budget for the two (2) months January to February 2022.', 7, 'bold'], [8, '10 marks', 1, 'bold']]
};

const table = document.getElementById('sheet');

function addCell(tr, tag, text, span, cls) {
  const cell = document.createElement(tag);
  cell.textContent = text.replace(/ {2}/g, '\u00a0 ');
  if (span) cell.colSpan = span;
  if (cls) cell.className = cls;
  tr.appendChild(cell);
}

[26].concat(widths).forEach(w => {
  const col = document.createElement('col');
  col.style.width = w + 'px';
  table.querySelector('colgroup').appendChild(col);
});

const head = table.tHead.insertRow();
addCell(head, 'th', '', 1, 'corner');
widths.forEach((w, i) => addCell(head, 'th', String.fromCharCode(65 + i), 1, i === 10 ? 'selected' : ''));

for (let r = firstRow; r <= lastRow; r++) {
  const tr = table.tBodies[0].insertRow();
  addCell(tr, 'th', String(r), 1, r === 43 ? 'selected' : '');
  let c = 0;
  while (c < widths.length) {
    const found = (cells[r] || []).find(item => item[0] === c);
    if (found) {
      addCell(tr, 'td', found[1], found[2], found[3]);
      c += found[2] || 1;
    } else {
      addCell(tr, 'td', '');
      c++;
    }
  }
}
```
